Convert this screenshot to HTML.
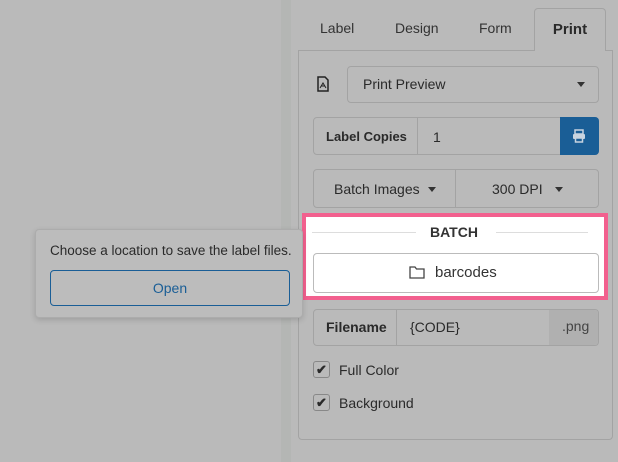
<!DOCTYPE html>
<html><head><style>
*{box-sizing:border-box;margin:0;padding:0}
body{width:618px;height:462px;background:#bababa;font-family:"Liberation Sans",sans-serif;color:#2a2a2a;position:relative;overflow:hidden;font-size:14px}
.a{position:absolute}
.strip{left:281px;top:0;width:10px;height:462px;background:#b4b6b4}
.panel{left:298px;top:50px;width:315px;height:390px;border:1px solid #a3a3a3;border-radius:0 0 4px 4px}
.tab{top:20px;font-size:14px;color:#333}
.ptab{left:534px;top:8px;width:72px;height:43px;border:1px solid #a3a3a3;border-bottom:none;border-radius:4px 4px 0 0;background:#bababa;text-align:center;line-height:42px;font-weight:bold;font-size:15px}
.box{border:1px solid #a3a3a3;border-radius:4px}
.caret{display:inline-block;width:0;height:0;border-left:4px solid transparent;border-right:4px solid transparent;border-top:5px solid #333}
</style></head><body>
<div class="a strip"></div>
<div class="a panel"></div>
<div class="a tab" style="left:320px">Label</div>
<div class="a tab" style="left:395px">Design</div>
<div class="a tab" style="left:479px">Form</div>
<div class="a ptab">Print</div>

<svg class="a" style="left:317px;top:76px" width="12" height="16" viewBox="0 0 12 16"><path d="M1 1h7l3 3v11H1z" fill="none" stroke="#222" stroke-width="1.5"/><path d="M3 12l3-5 3 5M4 10h4" fill="none" stroke="#222" stroke-width="1"/></svg>
<div class="a box" style="left:347px;top:66px;width:252px;height:37px"></div>
<div class="a" style="left:363px;top:76px">Print Preview</div>
<div class="a caret" style="left:577px;top:82px"></div>

<div class="a box" style="left:313px;top:117px;width:286px;height:38px"></div>
<div class="a" style="left:417px;top:117px;width:1px;height:38px;background:#a3a3a3"></div>
<div class="a" style="left:326px;top:129px;font-weight:bold;font-size:13px">Label Copies</div>
<div class="a" style="left:433px;top:129px">1</div>
<div class="a" style="left:560px;top:117px;width:39px;height:38px;background:#1a5e96;border-radius:0 4px 4px 0"></div>
<svg class="a" style="left:572px;top:129px" width="14" height="14" viewBox="0 0 14 14"><rect x="3" y="1" width="8" height="4" fill="none" stroke="#c8d4e0" stroke-width="1.5"/><rect x="1" y="5" width="12" height="5" rx="1" fill="#c8d4e0"/><rect x="3.5" y="9" width="7" height="4" fill="#1a5e96" stroke="#c8d4e0" stroke-width="1.5"/></svg>

<div class="a box" style="left:313px;top:169px;width:286px;height:39px"></div>
<div class="a" style="left:455px;top:169px;width:1px;height:39px;background:#a3a3a3"></div>
<div class="a" style="left:334px;top:181px">Batch Images</div>
<div class="a caret" style="left:428px;top:187px"></div>
<div class="a" style="left:492px;top:181px">300 DPI</div>
<div class="a caret" style="left:555px;top:187px"></div>

<div class="a" style="left:302px;top:213px;width:306px;height:87px;border:4px solid #f2608e;background:#fff"></div>
<div class="a" style="left:312px;top:232px;width:104px;height:1px;background:#ddd"></div>
<div class="a" style="left:496px;top:232px;width:92px;height:1px;background:#ddd"></div>
<div class="a" style="left:430px;top:224px;font-weight:bold;font-size:14px;color:#333">BATCH</div>
<div class="a" style="left:313px;top:253px;width:286px;height:40px;border:1px solid #bbb;border-radius:4px;background:#fff"></div>
<svg class="a" style="left:409px;top:266px" width="16" height="13" viewBox="0 0 16 13"><path d="M1 1h5l1.5 2H15v9H1z" fill="none" stroke="#444" stroke-width="1.3"/></svg>
<div class="a" style="left:435px;top:264px;font-size:15px;color:#333">barcodes</div>

<div class="a" style="left:35px;top:229px;width:268px;height:89px;background:#bcbcbc;border:1px solid #acacac;border-radius:4px;box-shadow:0 2px 6px rgba(0,0,0,.15)"></div>
<div class="a" style="left:50px;top:243px;font-size:13.5px">Choose a location to save the label files.</div>
<div class="a" style="left:50px;top:270px;width:240px;height:36px;border:1px solid #1a5e96;border-radius:4px;text-align:center;line-height:34px;color:#1a5e96">Open</div>

<div class="a box" style="left:313px;top:309px;width:286px;height:37px"></div>
<div class="a" style="left:396px;top:309px;width:1px;height:37px;background:#a3a3a3"></div>
<div class="a" style="left:549px;top:310px;width:49px;height:35px;background:#b0b0b0;border-radius:0 4px 4px 0"></div>
<div class="a" style="left:326px;top:319px;font-weight:bold">Filename</div>
<div class="a" style="left:410px;top:319px">{CODE}</div>
<div class="a" style="left:562px;top:318px;color:#444">.png</div>

<div class="a" style="left:313px;top:361px;width:17px;height:17px;border:1px solid #888;border-radius:3px;text-align:center;line-height:15px;font-size:13px;font-weight:bold">✔</div>
<div class="a" style="left:339px;top:362px">Full Color</div>
<div class="a" style="left:313px;top:394px;width:17px;height:17px;border:1px solid #888;border-radius:3px;text-align:center;line-height:15px;font-size:13px;font-weight:bold">✔</div>
<div class="a" style="left:339px;top:395px">Background</div>
</body></html>
